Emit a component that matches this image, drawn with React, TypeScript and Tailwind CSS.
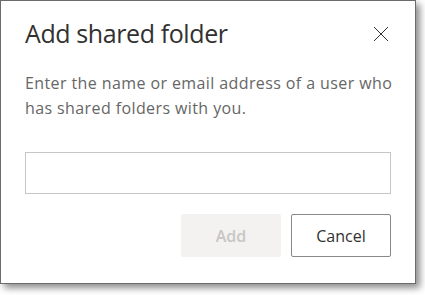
export default function App() {
  return (
    <div className="w-[425px] h-[295px] bg-white overflow-hidden" style={{ fontFamily: '"Open Sans", "Noto Sans", sans-serif' }}>
      <div className="w-[416px] h-[284px] border border-[#6b6b6b] bg-white shadow-[4px_4px_7px_rgba(0,0,0,0.45)] flex flex-col px-6">
        <div className="flex items-center justify-between h-[64px] pt-[2px]">
          <h1 className="text-[25px] text-[#323130] tracking-[-0.4px]">Add shared folder</h1>
          <button className="w-[16px] h-[16px] mr-[2px] text-[#323130]" aria-label="Close">
            <svg viewBox="0 0 16 16" width="16" height="16" fill="none" stroke="currentColor" strokeWidth="1">
              <path d="M1 1L15 15M15 1L1 15" />
            </svg>
          </button>
        </div>
        <p className="mt-[6px] -mr-3 text-[16px] leading-[25px] text-[#666666] tracking-[0.4px]">
          Enter the name or email address of a user who has shared folders with you.
        </p>
        <input className="mt-[31px] h-[42px] w-full border border-[#c8c6c4] outline-none px-2 text-[15px]" />
        <div className="mt-[20px] flex justify-end gap-[10px]">
          <button disabled className="w-[100px] h-[43px] rounded-[2px] bg-[#f3f2f1] text-[#c8c6c4] text-[16px] font-semibold">Add</button>
          <button className="w-[100px] h-[43px] rounded-[2px] border border-[#8a8886] text-[#323130] text-[16px]">Cancel</button>
        </div>
      </div>
    </div>
  )
}
